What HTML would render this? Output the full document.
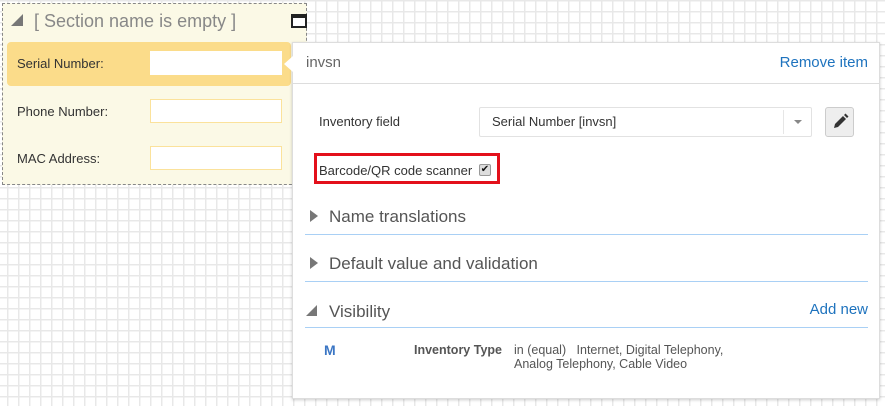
<!DOCTYPE html>
<html><head><meta charset="utf-8"><style>
*{box-sizing:border-box;margin:0;padding:0}
body{width:885px;height:406px;overflow:hidden;font-family:"Liberation Sans",Arial,sans-serif;background-color:#fff;
background-image:linear-gradient(to right,#e8e8e8 1.5px,transparent 1.5px),linear-gradient(to bottom,#e8e8e8 1.5px,transparent 1.5px);
background-size:11px 11px;background-position:7px 0px;position:relative}
.sec{position:absolute;left:2px;top:3px;width:305px;height:182px;background:#fbf9e6;border:1px dashed #888}
.sec .tri{position:absolute;left:8px;top:10px;width:0;height:0;border-left:12px solid transparent;border-bottom:12px solid #777}
.sec .title{position:absolute;left:31px;top:7px;font-size:18px;color:#888}
.sec .win{position:absolute;left:288px;top:10px;width:16px;height:14px;border:2px solid #222;border-top-width:4px;background:#fff}
.row{position:absolute;left:7px;width:284px;height:44px;font-size:13px;color:#333}
.row span{position:absolute;left:10px;top:14px}
.row i{position:absolute;left:143px;top:9px;width:132px;height:24px;background:#fff;border:1px solid #fbe29b}
.hl{background:#fbdc8a;border-radius:4px}
.hl i{border-color:#fff}
.panel{position:absolute;left:292px;top:42px;width:588px;height:357px;background:#fff;border:1px solid #ddd;box-shadow:0 1px 3px rgba(0,0,0,.2)}
.arrow{position:absolute;left:284px;top:56px;width:0;height:0;border-top:8px solid transparent;border-bottom:8px solid transparent;border-right:9px solid #fff}
.p{position:absolute;font-size:13px;color:#333;white-space:nowrap}
.blue{color:#1e73be}
.line{position:absolute;left:12px;right:11px;height:1px;background:#a9d0f5}
.rtri{position:absolute;width:0;height:0;border-top:6px solid transparent;border-bottom:6px solid transparent;border-left:8px solid #777}
</style></head><body>
<div class="sec">
<div class="tri"></div><div class="title">[ Section name is empty ]</div><div class="win"></div>
</div>
<div class="row hl" style="top:42px"><span>Serial Number:</span><i></i></div>
<div class="row" style="top:90px"><span>Phone Number:</span><i></i></div>
<div class="row" style="top:137px"><span>MAC Address:</span><i></i></div>
<div class="panel">
<div class="p" style="left:13px;top:11px;font-size:15px;color:#666">invsn</div>
<div class="p blue" style="right:11px;top:11px;font-size:15px">Remove item</div>
<div style="position:absolute;left:0;right:0;top:40px;height:1px;background:#ddd"></div>
<div class="p" style="left:26px;top:71px">Inventory field</div>
<div style="position:absolute;left:186px;top:64px;width:333px;height:30px;border:1px solid #e2e2e2;border-radius:2px"></div>
<div class="p" style="left:199px;top:71px">Serial Number [invsn]</div>
<div style="position:absolute;left:490px;top:67px;width:1px;height:24px;background:#e6e6e6"></div>
<div style="position:absolute;left:501px;top:77px;border-left:4px solid transparent;border-right:4px solid transparent;border-top:4px solid #888"></div>
<div style="position:absolute;left:532px;top:64px;width:29px;height:30px;background:#eee;border:1px solid #ccc;border-radius:3px">
<svg width="27" height="28" viewBox="0 0 27 28"><path d="M8 20 L9 16 L17 8 L20 11 L12 19 Z M18 7 L19.5 5.5 L22.5 8.5 L21 10 Z" fill="#333"/></svg></div>
<div style="position:absolute;left:21px;top:110px;width:186px;height:31px;border:3px solid #e3101b"></div>
<div class="p" style="left:26px;top:120px">Barcode/QR code scanner</div>
<div style="position:absolute;left:186px;top:121px;width:12px;height:12px;background:#ddd;border:1px solid #999;border-radius:2px;font-size:10px;line-height:10px;text-align:center;color:#111">✔</div>
<div class="rtri" style="left:17px;top:167px"></div>
<div class="p" style="left:36px;top:164px;font-size:17px;color:#555">Name translations</div>
<div class="line" style="top:191px"></div>
<div class="rtri" style="left:17px;top:214px"></div>
<div class="p" style="left:36px;top:211px;font-size:17px;color:#555">Default value and validation</div>
<div class="line" style="top:238px"></div>
<div style="position:absolute;left:13px;top:262px;border-left:11px solid transparent;border-bottom:11px solid #777"></div>
<div class="p" style="left:36px;top:259px;font-size:17px;color:#555">Visibility</div>
<div class="p blue" style="right:11px;top:258px;font-size:15px">Add new</div>
<div class="line" style="top:284px"></div>
<div class="p blue" style="left:31px;top:299px;font-weight:bold;font-size:14px;color:#3b76c4">M</div>
<div class="p" style="left:121px;top:300px;font-size:12.5px;font-weight:bold;color:#555">Inventory Type</div>
<div class="p" style="left:221px;top:300px;font-size:12.5px;color:#555;line-height:14px">in (equal)&nbsp;&nbsp; Internet, Digital Telephony,<br>Analog Telephony, Cable Video</div>
</div>
<div class="arrow"></div>
</body></html>
